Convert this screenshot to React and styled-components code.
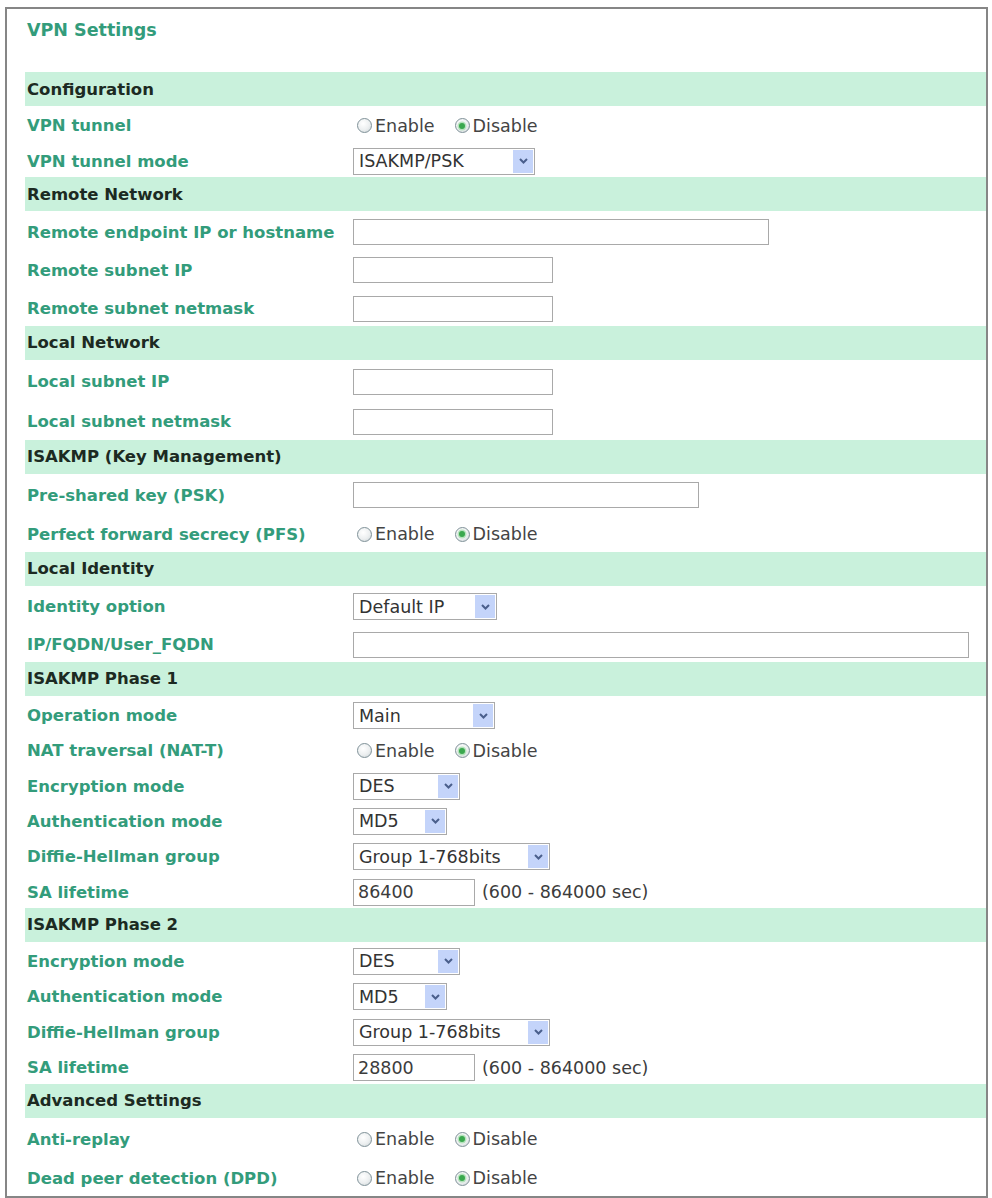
import styled, { createGlobalStyle } from "styled-components";

const colors = {
  green: "#339c7b",
  band: "#c9f1dc",
  head: "#1c2a22",
  text: "#333",
  field: "#a9a9a9",
  arrowBg: "#c4d4fa",
  arrow: "#4a5f8c",
};

const GlobalStyle = createGlobalStyle`
  html, body { margin: 0; padding: 0; background: #fff; }
  body { font-family: "DejaVu Sans", Verdana, sans-serif; }
`;

const Frame = styled.div`
  margin: 7px 4px 2px 5px;
  border: 2px solid #868686;
  padding: 0 0 0 18px;
`;

const Title = styled.h1`
  margin: 0;
  padding: 11px 0 32px 2px;
  height: 20px;
  line-height: 20px;
  font-size: 17.5px;
  font-weight: bold;
  color: ${colors.green};
`;

const Band = styled.div`
  height: 34px;
  display: flex;
  align-items: center;
  padding-left: 2px;
  background: ${colors.band};
  color: ${colors.head};
  font-size: 16.5px;
  font-weight: bold;
`;

const Row = styled.div`
  box-sizing: border-box;
  display: grid;
  grid-template-columns: 328px 1fr;
  align-items: center;
  padding-top: 4px;
  height: ${(p) => p.$h}px;
`;

const Label = styled.div`
  padding-left: 2px;
  font-size: 16.5px;
  font-weight: bold;
  color: ${colors.green};
  white-space: nowrap;
`;

const Value = styled.div`
  display: flex;
  align-items: center;
  font-size: 17.5px;
  color: ${colors.text};
`;

const TextBox = styled.div`
  box-sizing: border-box;
  width: ${(p) => p.$w}px;
  height: ${(p) => p.$ht || 26}px;
  border: 1px solid ${colors.field};
  background: #fff;
  padding: 0 4px;
  display: flex;
  align-items: center;
  color: #3c3c3c;
`;

const Select = styled.div`
  box-sizing: border-box;
  width: ${(p) => p.$w}px;
  height: 27px;
  border: 1px solid ${colors.field};
  background: #fff;
  display: flex;
  align-items: center;
  padding: 1px;
`;

const SelectText = styled.span`
  flex: 1;
  padding-left: 4px;
  color: #333;
  white-space: nowrap;
`;

const Arrow = styled.span`
  width: 20px;
  height: 100%;
  background: ${colors.arrowBg};
  display: flex;
  align-items: center;
  justify-content: center;
`;

const Hint = styled.span`
  margin-left: 7px;
  color: #3c3c3c;
`;

const Option = styled.span`
  display: inline-flex;
  align-items: center;
  margin-left: 4px;
  margin-right: 16px;
  color: #444;
`;

const Dot = styled.span`
  box-sizing: border-box;
  width: 15px;
  height: 15px;
  margin-right: 3px;
  border-radius: 50%;
  border: 1px solid #7f9198;
  background: radial-gradient(circle at 40% 35%, #ffffff 0%, #eceff0 55%, #c9d1d4 100%);
  display: inline-flex;
  align-items: center;
  justify-content: center;
  &::after {
    content: "";
    width: 6px;
    height: 6px;
    border-radius: 50%;
    background: ${(p) => (p.$on ? "#3aa84e" : "transparent")};
    box-shadow: ${(p) => (p.$on ? "0 0 0 1.5px #b5e2bc" : "none")};
  }
`;

function Chevron() {
  return (
    <svg width="11" height="8" viewBox="0 0 11 8">
      <path d="M2 2 L5.5 5.5 L9 2" fill="none" stroke={colors.arrow} strokeWidth="2" />
    </svg>
  );
}

function Drop({ w, v }) {
  return (
    <Select $w={w}>
      <SelectText>{v}</SelectText>
      <Arrow>
        <Chevron />
      </Arrow>
    </Select>
  );
}

function Radios({ on = "Disable" }) {
  return (
    <>
      <Option>
        <Dot $on={on === "Enable"} />
        Enable
      </Option>
      <Option>
        <Dot $on={on === "Disable"} />
        Disable
      </Option>
    </>
  );
}

const sections = [
  {
    title: "Configuration",
    h: 35.5,
    rows: [
      ["VPN tunnel", <Radios />],
      ["VPN tunnel mode", <Drop w={182} v="ISAKMP/PSK" />],
    ],
  },
  {
    title: "Remote Network",
    h: 38.3,
    rows: [
      ["Remote endpoint IP or hostname", <TextBox $w={416} />],
      ["Remote subnet IP", <TextBox $w={200} />],
      ["Remote subnet netmask", <TextBox $w={200} />],
    ],
  },
  {
    title: "Local Network",
    h: 40,
    rows: [
      ["Local subnet IP", <TextBox $w={200} />],
      ["Local subnet netmask", <TextBox $w={200} />],
    ],
  },
  {
    title: "ISAKMP (Key Management)",
    h: 39,
    rows: [
      ["Pre-shared key (PSK)", <TextBox $w={346} />],
      ["Perfect forward secrecy (PFS)", <Radios />],
    ],
  },
  {
    title: "Local Identity",
    h: 38,
    rows: [
      ["Identity option", <Drop w={144} v="Default IP" />],
      ["IP/FQDN/User_FQDN", <TextBox $w={616} />],
    ],
  },
  {
    title: "ISAKMP Phase 1",
    h: 35.3,
    rows: [
      ["Operation mode", <Drop w={142} v="Main" />],
      ["NAT traversal (NAT-T)", <Radios />],
      ["Encryption mode", <Drop w={107} v="DES" />],
      ["Authentication mode", <Drop w={94} v="MD5" />],
      ["Diffie-Hellman group", <Drop w={197} v="Group 1-768bits" />],
      ["SA lifetime", <><TextBox $w={122} $ht={27}>86400</TextBox><Hint>(600 - 864000 sec)</Hint></>],
    ],
  },
  {
    title: "ISAKMP Phase 2",
    h: 35.5,
    rows: [
      ["Encryption mode", <Drop w={107} v="DES" />],
      ["Authentication mode", <Drop w={94} v="MD5" />],
      ["Diffie-Hellman group", <Drop w={197} v="Group 1-768bits" />],
      ["SA lifetime", <><TextBox $w={122} $ht={27}>28800</TextBox><Hint>(600 - 864000 sec)</Hint></>],
    ],
  },
  {
    title: "Advanced Settings",
    h: 39,
    rows: [
      ["Anti-replay", <Radios />],
      ["Dead peer detection (DPD)", <Radios />],
    ],
  },
];

export default function App() {
  return (
    <>
      <GlobalStyle />
      <Frame>
        <Title>VPN Settings</Title>
        {sections.map((s) => (
          <div key={s.title}>
            <Band>{s.title}</Band>
            {s.rows.map(([label, value], i) => (
              <Row key={i} $h={s.h}>
                <Label>{label}</Label>
                <Value>{value}</Value>
              </Row>
            ))}
          </div>
        ))}
      </Frame>
    </>
  );
}
